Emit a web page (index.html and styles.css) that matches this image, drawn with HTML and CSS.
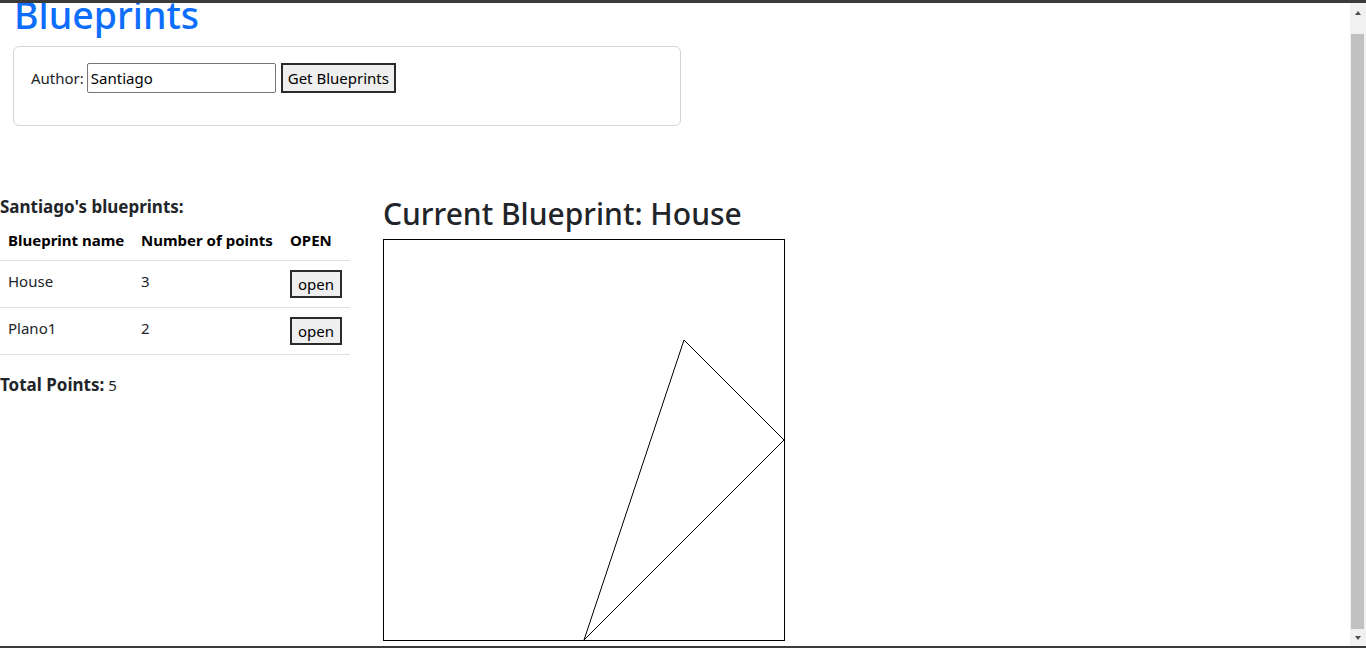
FILE: index.html
```html
<!DOCTYPE html>
<html lang="en">
<head>
<meta charset="utf-8">
<title>Blueprints</title>
<link rel="stylesheet" href="styles.css">
</head>
<body>
<div class="frame">
  <div class="topbar"></div>
  <div class="viewport">
    <main class="page">
      <h1 class="title">Blueprints</h1>
      <section class="card">
        <form class="author-form">
          <label class="author-label" for="author">Author:</label>
          <input class="author-input" id="author" type="text" value="Santiago">
          <button class="btn" type="button">Get Blueprints</button>
        </form>
      </section>
      <div class="content">
        <section class="left">
          <h3 class="list-title">Santiago's blueprints:</h3>
          <table class="bp-table">
            <thead>
              <tr><th class="c1">Blueprint name</th><th class="c2">Number of points</th><th class="c3">OPEN</th></tr>
            </thead>
            <tbody>
              <tr><td>House</td><td>3</td><td><button class="btn btn-open" type="button">open</button></td></tr>
              <tr><td>Plano1</td><td>2</td><td><button class="btn btn-open" type="button">open</button></td></tr>
            </tbody>
          </table>
          <p class="total"><strong>Total Points:</strong> <span class="total-num">5</span></p>
        </section>
        <section class="right">
          <h2 class="current">Current Blueprint: House</h2>
          <div class="canvas">
            <svg width="400" height="400" viewBox="0 0 400 400">
              <polygon points="200,400 300,100 400,200" fill="none" stroke="#000" stroke-width="1"/>
            </svg>
          </div>
        </section>
      </div>
    </main>
    <div class="scrollbar">
      <div class="sb-btn sb-up"></div>
      <div class="thumb"></div>
      <div class="sb-btn sb-down"></div>
    </div>
  </div>
  <div class="bottombar"></div>
</div>
</body>
</html>
```
FILE: styles.css
```css
* { box-sizing: border-box; }
html, body { margin: 0; height: 100%; }
body {
  font-family: "Noto Sans", "Open Sans", sans-serif;
  font-size: 15px;
  line-height: 24px;
  color: #212529;
  background: #fff;
  overflow: hidden;
}
.frame { display: flex; flex-direction: column; height: 648px; }
.topbar { flex: none; height: 3px; background: #3b3b3b; }
.bottombar { flex: none; height: 2px; background: #3b3b3b; }
.viewport { flex: 1; display: flex; min-height: 0; }
.page { flex: 1; overflow: hidden; white-space: nowrap; }

.scrollbar { flex: none; width: 16px; background: #f1f1f1; display: flex; flex-direction: column; }
.sb-btn { flex: none; height: 17px; display: flex; align-items: center; justify-content: center; }
.sb-up { padding-top: 3px; }
.sb-up::before { content: ""; border-left: 3.5px solid transparent; border-right: 3.5px solid transparent; border-bottom: 4px solid #505050; }
.sb-down::before { content: ""; border-left: 3.5px solid transparent; border-right: 3.5px solid transparent; border-top: 4px solid #505050; }
.thumb { flex: none; margin: 14px 2px 0 1px; height: 595px; background: #c1c1c1; }

.title {
  margin: -11px 0 8px;
  padding-left: 14px;
  font-size: 37.5px;
  font-weight: 500;
  line-height: 46px;
  color: #0d6efd;
}
.card {
  margin-left: 13px;
  width: 668px;
  border: 1px solid #d4d4d4;
  border-radius: 6px;
  padding: 16px;
}
.author-form { display: flex; align-items: center; height: 30px; margin: 0 0 16px; }
.author-label { margin-left: 1px; margin-right: 3px; }
.author-input {
  width: 189px; height: 30px;
  border: 1px solid #767676; border-radius: 2px;
  padding: 1px 3px;
  font: inherit; color: #000;
}
.btn {
  font: inherit; color: #000;
  background: #efefef;
  border: 2px solid #2b2b2b;
  padding: 0;
  white-space: nowrap;
}
.author-form .btn { margin-left: 5px; height: 30px; width: 115px; }

.content { display: flex; gap: 33px; margin-top: 69px; align-items: flex-start; }
.left { width: 350px; flex: none; }
.list-title { margin: 0 0 1px; font-size: 17px; font-weight: 700; line-height: 24px; color: #212529; }
.bp-table { width: 350px; border-collapse: collapse; table-layout: fixed; }
.bp-table th, .bp-table td {
  padding: 8px; text-align: left; vertical-align: top;
  line-height: 24px; border-bottom: 1px solid #dee2e6;
}
.bp-table th { font-weight: 700; color: #000; }
.bp-table td { height: 47px; }
.c1 { width: 133px; }
.c2 { width: 149px; }
.c3 { width: 68px; }
.btn-open { display: block; margin-top: 1px; height: 28px; width: 52px; line-height: 24px; }
.total { margin: 16px 0 0; line-height: 28px; }
.total strong { font-size: 17px; font-weight: 700; }

.right { flex: none; }
.current { margin: 0 0 6px; font-size: 30px; font-weight: 500; line-height: 38px; color: #212529; }
.canvas { width: 402px; height: 402px; border: 1px solid #000; }
.canvas svg { display: block; }
```
